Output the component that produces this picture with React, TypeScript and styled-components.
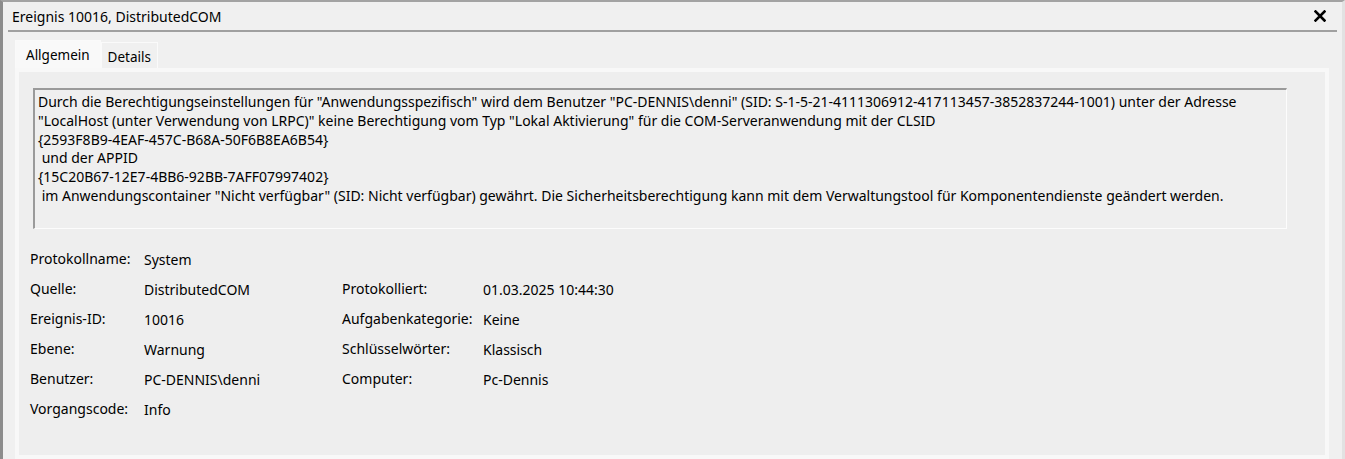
import React from "react"
import styled, { createGlobalStyle } from "styled-components"

const GlobalStyle = createGlobalStyle`
  html, body {
    margin: 0;
    padding: 0;
    background: #f0f0f0;
  }
  body {
    font-family: "Noto Sans", "Open Sans", sans-serif;
    color: #000;
  }
`

const Window = styled.div`
  width: 1345px;
  height: 459px;
  box-sizing: border-box;
  background: #f0f0f0;
  border-top: 2px solid #a3a3a3;
  border-left: 3px solid #8c8c8c;
  border-right: 3px solid #e2e2e2;
  display: flex;
  flex-direction: column;
  overflow: hidden;
`

const TitleBar = styled.div`
  height: 28px;
  margin: 0 5px 0 5px;
  padding: 0 10px 0 4px;
  border-bottom: 2px solid #a0a0a0;
  display: flex;
  align-items: center;
  justify-content: space-between;
`

const Title = styled.span`
  font-size: 14px;
`

const CloseButton = styled.button`
  border: none;
  background: transparent;
  padding: 0;
  width: 14px;
  height: 14px;
  display: flex;
  align-items: center;
  justify-content: center;
  cursor: pointer;
`

const Body = styled.div`
  flex: 1;
  display: flex;
  flex-direction: column;
  padding: 8px 12px 0 12px;
`

const TabStrip = styled.div`
  display: flex;
  align-items: flex-end;
  height: 28px;
`

const Tab = styled.div<{ $active?: boolean }>`
  box-sizing: border-box;
  height: ${(p) => (p.$active ? "28px" : "26px")};
  padding: 0 ${(p) => (p.$active ? "10px" : "6px")};
  padding-top: ${(p) => (p.$active ? "0" : "3px")};
  background: ${(p) => (p.$active ? "#f9f9f9" : "#f0f0f0")};
  border: 1px solid #fafafa;
  border-bottom: none;
  font-size: 13.5px;
  display: flex;
  align-items: center;
`

const Panel = styled.div`
  flex: 1;
  box-sizing: border-box;
  width: 1314px;
  background: #eeeeee;
  border: 4px solid #f8f8f8;
  padding: 16px 0 0 11px;
  display: flex;
  flex-direction: column;
`

const Description = styled.div`
  box-sizing: border-box;
  width: 1254px;
  height: 141px;
  margin-left: 3px;
  padding: 3px 4px 0 3px;
  border-top: 2px solid #9a9a9a;
  border-left: 2px solid #9a9a9a;
  border-right: 1px solid #fcfcfc;
  border-bottom: 1px solid #fcfcfc;
  background: #efefef;
  font-size: 14px;
  line-height: 18.8px;
  white-space: pre-wrap;
  overflow: hidden;
`

const Grid = styled.div`
  margin-top: 15px;
  display: grid;
  grid-template-columns: 114px 198px 141px auto;
  grid-auto-rows: 30px;
  font-size: 14px;
`

const Label = styled.div<{ $lift?: number }>`
  display: flex;
  align-items: center;
  margin-top: ${(p) => -(p.$lift ?? 1)}px;
`

const Value = styled.div`
  display: flex;
  align-items: center;
`

const descriptionText = `Durch die Berechtigungseinstellungen für "Anwendungsspezifisch" wird dem Benutzer "PC-DENNIS\\denni" (SID: S-1-5-21-4111306912-417113457-3852837244-1001) unter der Adresse "LocalHost (unter Verwendung von LRPC)" keine Berechtigung vom Typ "Lokal Aktivierung" für die COM-Serveranwendung mit der CLSID 
{2593F8B9-4EAF-457C-B68A-50F6B8EA6B54}
 und der APPID 
{15C20B67-12E7-4BB6-92BB-7AFF07997402}
 im Anwendungscontainer "Nicht verfügbar" (SID: Nicht verfügbar) gewährt. Die Sicherheitsberechtigung kann mit dem Verwaltungstool für Komponentendienste geändert werden.`

type Field = [string, string]

const rows: [Field, Field | null][] = [
  [["Protokollname:", "System"], null],
  [["Quelle:", "DistributedCOM"], ["Protokolliert:", "01.03.2025 10:44:30"]],
  [["Ereignis-ID:", "10016"], ["Aufgabenkategorie:", "Keine"]],
  [["Ebene:", "Warnung"], ["Schlüsselwörter:", "Klassisch"]],
  [["Benutzer:", "PC-DENNIS\\denni"], ["Computer:", "Pc-Dennis"]],
  [["Vorgangscode:", "Info"], null],
]

const CloseIcon = () => (
  <svg width="12" height="12" viewBox="0 0 12 12">
    <path d="M1.5 1.5 L10.5 10.5 M10.5 1.5 L1.5 10.5" stroke="#000" strokeWidth="2.6" strokeLinecap="square" />
  </svg>
)

const App: React.FC = () => {
  return (
    <>
      <GlobalStyle />
      <Window>
        <TitleBar>
          <Title>Ereignis 10016, DistributedCOM</Title>
          <CloseButton aria-label="Schließen">
            <CloseIcon />
          </CloseButton>
        </TitleBar>
        <Body>
          <TabStrip>
            <Tab $active>Allgemein</Tab>
            <Tab>Details</Tab>
          </TabStrip>
          <Panel>
            <Description>{descriptionText}</Description>
            <Grid>
              {rows.map(([left, right], i) => (
                <React.Fragment key={i}>
                  <Label>{left[0]}</Label>
                  <Value>{left[1]}</Value>
                  <Label $lift={2}>{right ? right[0] : ""}</Label>
                  <Value>{right ? right[1] : ""}</Value>
                </React.Fragment>
              ))}
            </Grid>
          </Panel>
        </Body>
      </Window>
    </>
  )
}

export default App
